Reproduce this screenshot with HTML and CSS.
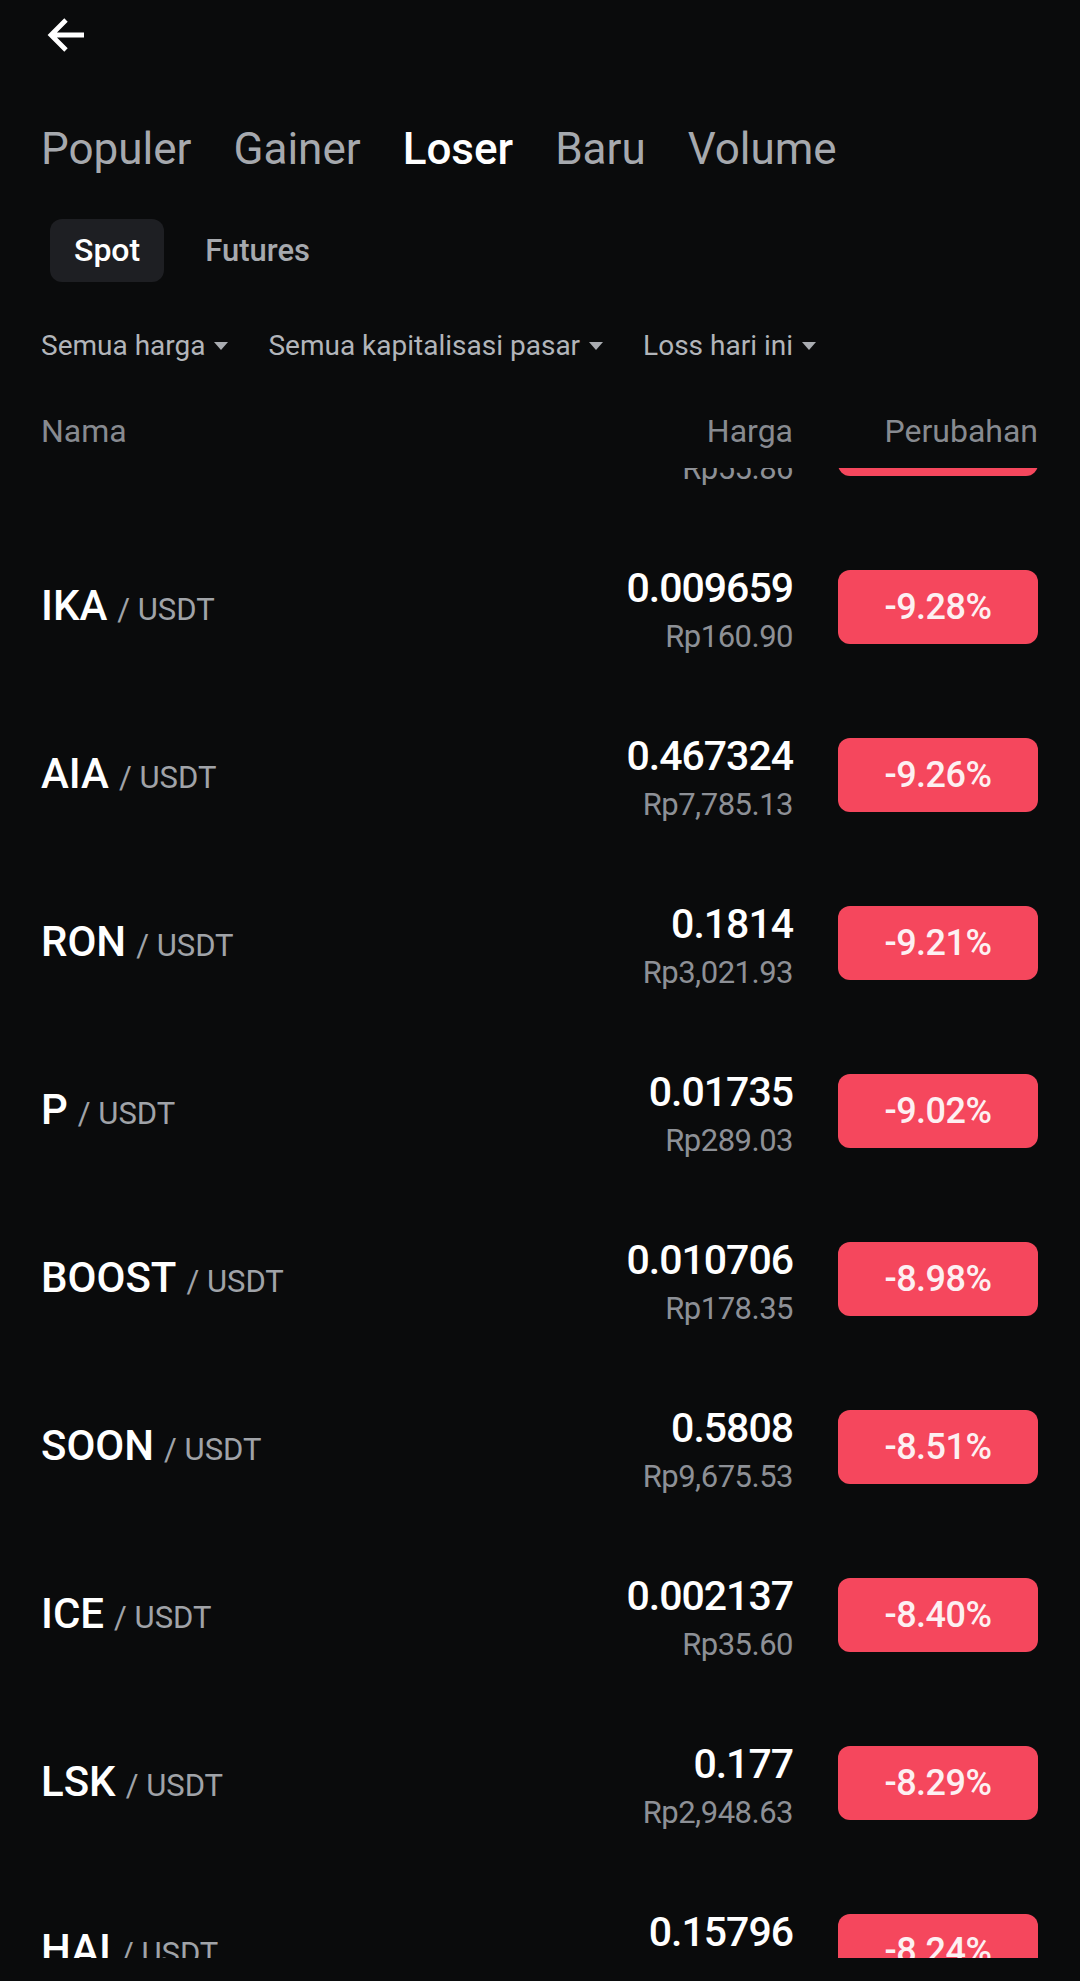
FILE: index.html
```html
<!DOCTYPE html>
<html lang="id">
<head>
    <meta charset="UTF-8">
    <meta name="viewport" content="width=device-width, initial-scale=1.0">
    <title>Pasar - Loser</title>
    <link rel="stylesheet" href="styles.css">
</head>
<body>
    <div class="topbar">
        <svg class="back" width="40" height="36" viewBox="0 0 40 36">
            <path d="M38 18 H5 M20 3 L5 18 L20 33" fill="none" stroke="#fff" stroke-width="4.8"/>
        </svg>
    </div>

    <nav class="tabs">
        <span class="tab">Populer</span>
        <span class="tab">Gainer</span>
        <span class="tab active">Loser</span>
        <span class="tab">Baru</span>
        <span class="tab">Volume</span>
    </nav>

    <div class="segment">
        <span class="seg active">Spot</span>
        <span class="seg">Futures</span>
    </div>

    <div class="filters">
        <span class="filter">Semua harga</span>
        <span class="filter">Semua kapitalisasi pasar</span>
        <span class="filter">Loss hari ini</span>
    </div>

    <div class="list-head">
        <span>Nama</span>
        <span class="right">Harga</span>
        <span class="right">Perubahan</span>
    </div>

    <div class="list">
        <div class="list-inner">
            <div class="row">
                <div class="pair"><span class="base">HOOK</span><span class="quote">/ USDT</span></div>
                <div class="price"><div class="last">0.003353</div><div class="fiat">Rp55.86</div></div>
                <div class="change">-9.31%</div>
            </div>
            <div class="row">
                <div class="pair"><span class="base">IKA</span><span class="quote">/ USDT</span></div>
                <div class="price"><div class="last">0.009659</div><div class="fiat">Rp160.90</div></div>
                <div class="change">-9.28%</div>
            </div>
            <div class="row">
                <div class="pair"><span class="base">AIA</span><span class="quote">/ USDT</span></div>
                <div class="price"><div class="last">0.467324</div><div class="fiat">Rp7,785.13</div></div>
                <div class="change">-9.26%</div>
            </div>
            <div class="row">
                <div class="pair"><span class="base">RON</span><span class="quote">/ USDT</span></div>
                <div class="price"><div class="last">0.1814</div><div class="fiat">Rp3,021.93</div></div>
                <div class="change">-9.21%</div>
            </div>
            <div class="row">
                <div class="pair"><span class="base">P</span><span class="quote">/ USDT</span></div>
                <div class="price"><div class="last">0.01735</div><div class="fiat">Rp289.03</div></div>
                <div class="change">-9.02%</div>
            </div>
            <div class="row">
                <div class="pair"><span class="base">BOOST</span><span class="quote">/ USDT</span></div>
                <div class="price"><div class="last">0.010706</div><div class="fiat">Rp178.35</div></div>
                <div class="change">-8.98%</div>
            </div>
            <div class="row">
                <div class="pair"><span class="base">SOON</span><span class="quote">/ USDT</span></div>
                <div class="price"><div class="last">0.5808</div><div class="fiat">Rp9,675.53</div></div>
                <div class="change">-8.51%</div>
            </div>
            <div class="row">
                <div class="pair"><span class="base">ICE</span><span class="quote">/ USDT</span></div>
                <div class="price"><div class="last">0.002137</div><div class="fiat">Rp35.60</div></div>
                <div class="change">-8.40%</div>
            </div>
            <div class="row">
                <div class="pair"><span class="base">LSK</span><span class="quote">/ USDT</span></div>
                <div class="price"><div class="last">0.177</div><div class="fiat">Rp2,948.63</div></div>
                <div class="change">-8.29%</div>
            </div>
            <div class="row">
                <div class="pair"><span class="base">HAI</span><span class="quote">/ USDT</span></div>
                <div class="price"><div class="last">0.15796</div><div class="fiat">Rp2,631.19</div></div>
                <div class="change">-8.24%</div>
            </div>
        </div>
    </div>
</body>
</html>
```

FILE: styles.css
```css
body {
    margin: 0;
    width: 1080px;
    height: 1981px;
    background: #0a0b0c;
    color: #fff;
    font-family: Roboto, "Noto Sans", sans-serif;
    overflow: hidden;
}

.topbar {
    height: 70px;
    padding-left: 46px;
    box-sizing: border-box;
}
.back {
    display: block;
    margin-top: 17px;
}

.tabs {
    display: flex;
    gap: 42px;
    padding: 36px 0 0 41px;
    font-size: 44px;
    line-height: 52px;
}
.tab {
    color: #a6a9ae;
}
.tab.active {
    color: #fff;
    font-weight: 500;
}

.segment {
    display: flex;
    gap: 17px;
    margin: 44px 0 0 50px;
}
.seg {
    height: 63px;
    line-height: 63px;
    padding: 0 24px;
    font-size: 31px;
    font-weight: 500;
    color: #a6a9ae;
    border-radius: 12px;
}
.seg.active {
    font-size: 32px;
    color: #fff;
    background: #1e1f23;
}

.filters {
    display: flex;
    gap: 40px;
    margin: 47px 0 0 41px;
    font-size: 28px;
    line-height: 34px;
    color: #b2b5ba;
}
.filter {
    display: flex;
    align-items: center;
}
.filter::after {
    content: "";
    margin: 0 0 0 9px;
    border-left: 7px solid transparent;
    border-right: 7px solid transparent;
    border-top: 8px solid #a9acb1;
}

.list-head {
    display: grid;
    grid-template-columns: 1fr auto 200px;
    column-gap: 45px;
    margin-top: 49px;
    padding: 0 42px 18px 41px;
    font-size: 32px;
    line-height: 38px;
    color: #878a90;
}
.list-head .right {
    text-align: right;
}

.list {
    height: 1490px;
    overflow: hidden;
}
.list-inner {
    margin-top: -113px;
}

.row {
    display: grid;
    grid-template-columns: 1fr auto 200px;
    column-gap: 45px;
    align-items: center;
    height: 168px;
    padding: 0 42px 0 41px;
}

.pair {
    padding-top: 6px;
    line-height: 50px;
}
.base {
    font-size: 42px;
    font-weight: 500;
}
.quote {
    margin-left: 10px;
    font-size: 31px;
    color: #a0a3a8;
}

.price {
    padding-top: 6px;
    text-align: right;
}
.last {
    font-size: 41px;
    line-height: 44px;
    letter-spacing: -1px;
    font-weight: 500;
}
.fiat {
    margin-top: 9px;
    font-size: 31px;
    line-height: 36px;
    letter-spacing: -0.5px;
    color: #8d9096;
}

.change {
    height: 74px;
    line-height: 74px;
    border-radius: 12px;
    background: #f5475d;
    text-align: center;
    font-size: 36px;
    letter-spacing: -0.5px;
    font-weight: 500;
    color: #fdf0f2;
}
```
